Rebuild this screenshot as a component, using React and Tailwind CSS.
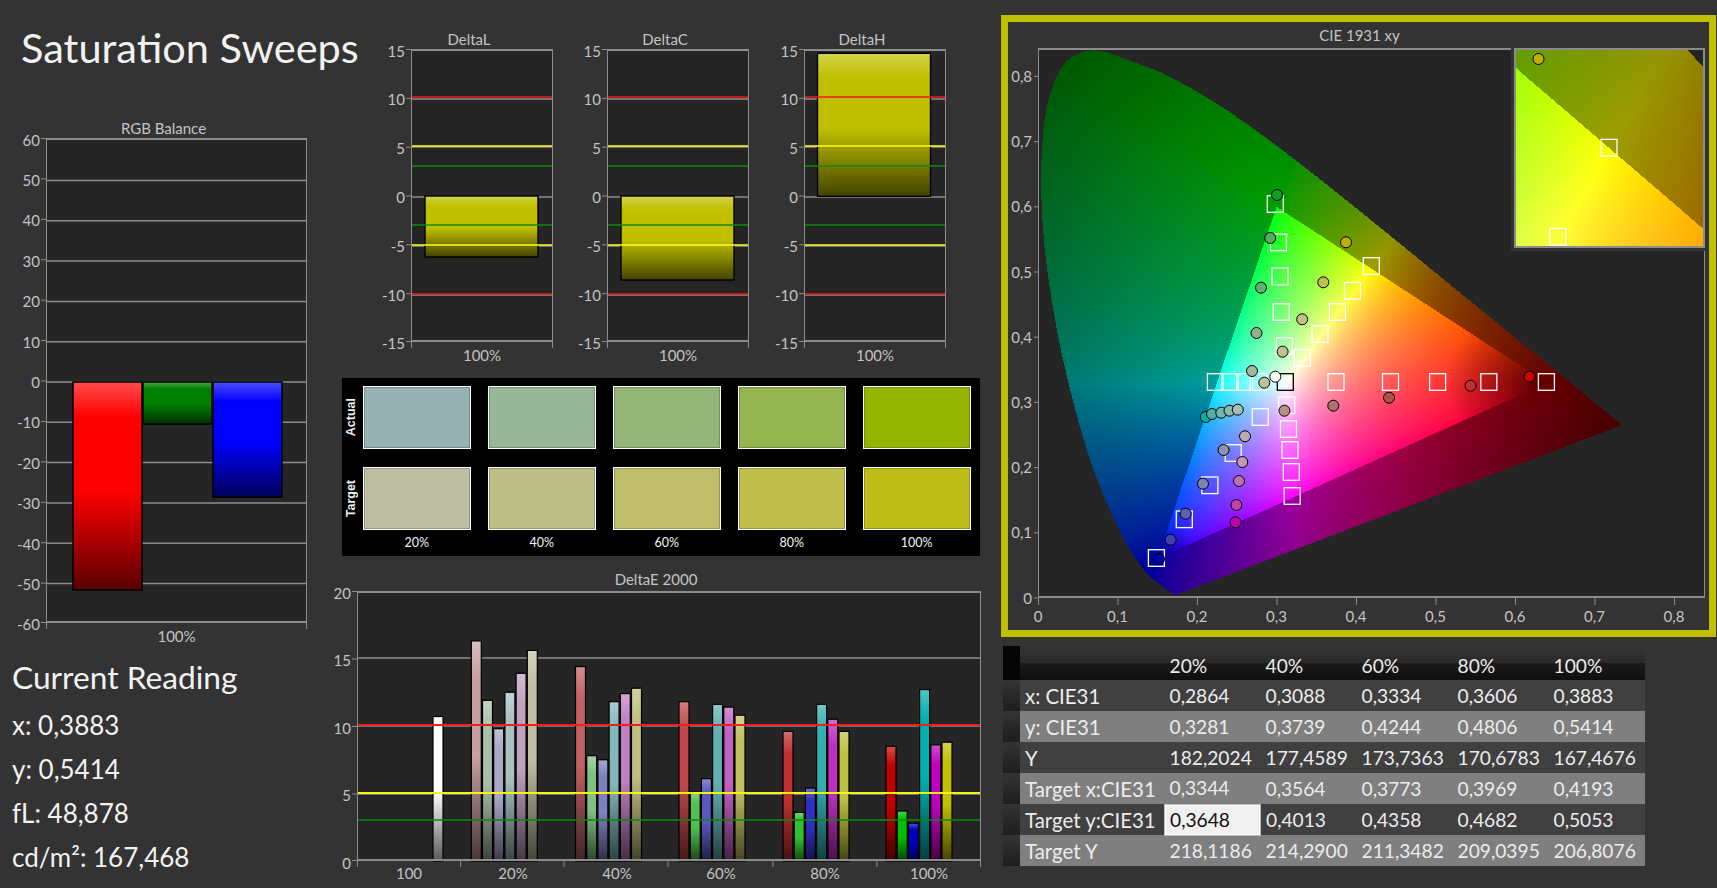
import { useEffect, useRef } from 'react'

const LOCUS_RAW = [
  [.1741,.005],[.1738,.0049],[.1733,.0048],[.1726,.0048],[.1714,.0051],[.1703,.0058],[.1689,.0069],[.1669,.0086],
  [.1644,.0109],[.1611,.0138],[.1566,.0177],[.151,.0227],[.144,.0297],[.1355,.0399],[.1241,.0578],[.1096,.0868],
  [.0913,.1327],[.0687,.2007],[.0454,.295],[.0235,.4127],[.0082,.5384],[.0039,.6548],[.0105,.7502],[.0285,.812],
  [.052,.8354],[.0787,.839],[.1247,.82],[.1547,.8059],[.1929,.7816],[.2296,.7543],[.2658,.7243],[.3016,.6923],[.3373,.6589],
  [.3731,.6245],[.4087,.5896],[.4441,.5547],[.4788,.5202],[.5125,.4866],[.5448,.4544],[.5752,.4242],[.6029,.3965],
  [.627,.3725],[.6482,.3514],[.6658,.334],[.6801,.3197],[.6915,.3083],[.7079,.292],[.719,.2809],[.726,.274],[.7334,.2666],[.7347,.2653],
]
// the 5nm table shows corners at this size, so round it off a bit
const LOCUS = LOCUS_RAW.flatMap((p, i, a) => {
  const p0 = a[Math.max(0, i - 1)], p2 = a[Math.min(a.length - 1, i + 1)], p3 = a[Math.min(a.length - 1, i + 2)]
  return [0, 1 / 3, 2 / 3].map(t => {
    const f = (k) => 0.5 * (2 * p[k] + (p2[k] - p0[k]) * t + (2 * p0[k] - 5 * p[k] + 4 * p2[k] - p3[k]) * t * t + (3 * p[k] - p0[k] - 3 * p2[k] + p3[k]) * t * t * t)
    return [f(0), f(1)]
  })
})
const R = [.64, .33], G = [.3, .6], B = [.15, .06]

const inLocus = (x, y) => {
  let inside = false
  for (let i = 0, j = LOCUS.length - 1; i < LOCUS.length; j = i++) {
    const [xi, yi] = LOCUS[i], [xj, yj] = LOCUS[j]
    if ((yi > y) !== (yj > y) && x < ((xj - xi) * (y - yi)) / (yj - yi) + xi) inside = !inside
  }
  return inside
}
const cross = (a, b, x, y) => (b[0] - a[0]) * (y - a[1]) - (b[1] - a[1]) * (x - a[0])
const segDist = (a, b, x, y) => {
  const dx = b[0] - a[0], dy = b[1] - a[1]
  const t = Math.min(1, Math.max(0, ((x - a[0]) * dx + (y - a[1]) * dy) / (dx * dx + dy * dy)))
  return Math.hypot(x - a[0] - t * dx, y - a[1] - t * dy)
}
const clamp = (v) => Math.min(1, Math.max(0, v))

// xy -> display colour, the gamut triangle is bright and everything around it dimmed
const xyColor = (x, y) => {
  const X = x / y, Z = (1 - x - y) / y
  let r = Math.max(0, 3.2406 * X - 1.5372 - 0.4986 * Z)
  let g = Math.max(0, -0.9689 * X + 1.8758 + 0.0415 * Z)
  let b = Math.max(0, 0.0557 * X - 0.204 + 1.057 * Z)
  const m = Math.max(r, g, b) || 1
  r = Math.pow(r / m, 0.75); g = Math.pow(g / m, 0.75); b = Math.pow(b / m, 0.75)
  const c1 = cross(R, G, x, y), c2 = cross(G, B, x, y), c3 = cross(B, R, x, y)
  let f
  if (c1 >= 0 && c2 >= 0 && c3 >= 0) {
    f = Math.min(clamp(0.3 + Math.hypot(x - R[0], y - R[1]) * 5.5), clamp(0.5 + Math.hypot(x - B[0], y - B[1]) * 9))
  } else {
    const d = Math.min(segDist(R, G, x, y), segDist(G, B, x, y), segDist(B, R, x, y))
    f = Math.max(0.33, 0.62 - 0.8 * d) * (1 - 0.45 * clamp((x - 0.45) / 0.25))
  }
  return [r * f * 255, g * f * 255, b * f * 255]
}

function Gamut({ w, h, toXY, className }) {
  const ref = useRef(null)
  useEffect(() => {
    const ctx = ref.current.getContext('2d')
    const img = ctx.createImageData(w, h)
    for (let py = 0; py < h; py++) {
      for (let px = 0; px < w; px++) {
        const [x, y] = toXY(px, py)
        if (y <= 0 || !inLocus(x, y)) continue
        const [r, g, b] = xyColor(x, y)
        const i = (py * w + px) * 4
        img.data[i] = r; img.data[i + 1] = g; img.data[i + 2] = b; img.data[i + 3] = 255
      }
    }
    ctx.putImageData(img, 0, 0)
  }, [])
  return <canvas ref={ref} width={w} height={h} className={className} />
}

const mix = (hex, to, t) => {
  const n = parseInt(hex.slice(1), 16)
  const ch = [n >> 16, (n >> 8) & 255, n & 255].map(c => Math.round(c + (to - c) * t))
  return `rgb(${ch.join(',')})`
}

function Bar({ x, y, w, h, color, sw = 1.5 }) {
  const id = `bar-${color.slice(1)}`
  return (
    <g>
      <linearGradient id={id} x1="0" y1="0" x2="0" y2="1">
        <stop offset="0" stopColor={mix(color, 255, 0.3)} />
        <stop offset="0.17" stopColor={color} />
        <stop offset="0.52" stopColor={color} />
        <stop offset="1" stopColor={mix(color, 0, 0.65)} />
      </linearGradient>
      <rect x={x} y={y} width={w} height={h} fill={`url(#${id})`} stroke="#000" strokeWidth={sw} />
    </g>
  )
}

function GridLine({ y, w }) {
  return <line x1="0" x2={w} y1={y} y2={y} stroke="#8c8c8c" strokeWidth="1.5" />
}

function Chart({ title, labels, xLabels, plotClass, w, h, children, xTicks, className = '', gapClass = 'mt-px' }) {
  return (
    <div className={`text-[15px] leading-[18px] text-[#c4c4c4] ${className}`}>
      <div className="text-center">{title}</div>
      <div className={`flex ${gapClass}`}>
        <div className="w-[26px] mt-[1.5px] -mb-[1.5px] flex flex-col justify-between items-end pr-[6px]">
          {labels.map(l => <div key={l} className="h-0 flex items-center whitespace-nowrap">{l}</div>)}
        </div>
        <div className={`bg-[#252525] ${plotClass}`}>
          <svg width={w} height={h} className="block overflow-visible">
            {children}
            <g stroke="#8c8c8c" fill="none">
              <line x1="0.5" y1="0" x2="0.5" y2={h} />
              <line x1={w - 0.5} y1="0" x2={w - 0.5} y2={h} />
              <line x1="0" y1="1" x2={w} y2="1" strokeWidth="2" />
              <line x1="0" y1={h - 1} x2={w} y2={h - 1} strokeWidth="2" />
              {xTicks.map(t => <line key={t} x1={t} x2={t} y1={h} y2={h + 6} />)}
            </g>
            {labels.map((_, i) => {
              const y = Math.min(h - 0.5, (i * h) / (labels.length - 1) + 0.5)
              return <line key={i} x1="-5" x2="0" y1={y} y2={y} stroke="#8c8c8c" />
            })}
          </svg>
        </div>
      </div>
      <div className="flex pl-[26px]">{xLabels}</div>
    </div>
  )
}

function DeltaChart({ title, bar, className = '' }) {
  const gridY = [50, 98, 148, 197, 246]
  return (
    <Chart title={title} labels={['15', '10', '5', '0', '-5', '-10', '-15']} plotClass="w-[142px] h-[293px]" w={142} h={293} xTicks={[0.5, 141.5]} className={`w-[168px] ${className}`}
      xLabels={<div className="w-[142px] text-center mt-[4px]">100%</div>}>
      {gridY.map(y => <GridLine key={y} y={y} w={142} />)}
      <Bar x={bar.x} y={bar.y} w={113} h={bar.h} color="#c0c000" sw={1.4} />
      <g fill="none">
        <line x1="0" x2="142" y1="48" y2="48" stroke="#f01818" strokeWidth="1.6" />
        <line x1="0" x2="142" y1="97" y2="97" stroke="#ffff20" strokeWidth="1.6" />
        <line x1="0" x2="142" y1="117" y2="117" stroke="#0e8a0e" strokeWidth="1.3" />
        <line x1="0" x2="142" y1="176" y2="176" stroke="#0e8a0e" strokeWidth="1.3" />
        <line x1="0" x2="142" y1="196" y2="196" stroke="#ffff20" strokeWidth="1.6" />
        <line x1="0" x2="142" y1="245" y2="245" stroke="#f01818" strokeWidth="1.6" />
      </g>
    </Chart>
  )
}

const SWATCHES = [
  { label: 'Actual', colors: ['#96b2b2', '#98b698', '#94b678', '#94b44e', '#94b400'] },
  { label: 'Target', colors: ['#bebea4', '#bebe88', '#bebe6a', '#bebe4c', '#c0be18'] },
]

const DE_GROUPS = [
  { label: '100', start: 76, bars: [[10.7, '#ffffff']] },
  { label: '20%', start: 114.3, bars: [[16.3, '#c8a0a0'], [11.9, '#a8c0a8'], [9.8, '#a8a8c8'], [12.5, '#a8c0c0'], [13.9, '#c0a0c0'], [15.6, '#c0c0a0']] },
  { label: '40%', start: 218.5, bars: [[14.4, '#c06060'], [7.8, '#80c080'], [7.5, '#8080c0'], [11.8, '#80b8b8'], [12.4, '#c080c0'], [12.8, '#c0c080']] },
  { label: '60%', start: 322, bars: [[11.8, '#c04848'], [5.1, '#50c050'], [6.1, '#5858c0'], [11.6, '#60b0b0'], [11.4, '#c060c0'], [10.8, '#c0c060']] },
  { label: '80%', start: 426, bars: [[9.6, '#c03030'], [3.6, '#30c030'], [5.4, '#3030c0'], [11.6, '#30b0b0'], [10.5, '#c030c0'], [9.6, '#c0c040']] },
  { label: '100%', start: 529, bars: [[8.5, '#c00000'], [3.7, '#00c000'], [2.8, '#0000c0'], [12.7, '#00b0b0'], [8.6, '#c000c0'], [8.8, '#c0c000']] },
]

// marker positions are page pixels, the plot sits at 1038,48
const SQUARES = [
  [1275.3,204],[1278.5,242.3],[1280,276.3],[1281.2,312],[1371.3,266],[1352.5,290.7],[1337.4,312],[1320,334],[1284.4,346],[1302.2,357.7],
  [1215.4,382],[1230,382],[1244.6,382],[1258.3,382],[1336,382],[1390.5,382],[1437.6,382],[1488.8,382],[1546.4,382],
  [1286.7,405.3],[1260.2,417],[1288.5,429],[1290,450],[1233.2,453],[1291.3,472],[1209.9,485.3],[1292.2,496],[1184.3,519.3],[1156.4,558],
]
const DOTS = [
  [1277,195,'#10a020'],[1270.2,238,'#50b060'],[1346,242.3,'#c0b000'],[1323.3,282.3,'#c0c050'],[1261,287.7,'#60b070'],[1302.2,319.3,'#c0c080'],
  [1256.5,333,'#90b090'],[1282.6,351.7,'#c0c090'],[1252,371,'#a0b8a0'],[1275.3,376.7,'#ffffff'],[1264.3,382.7,'#c0c0a0'],
  [1529.5,376.7,'#cc0000'],[1470.5,385.7,'#c03030'],[1389,397.7,'#b05050'],[1333.3,405.7,'#b07070'],[1284.4,410.7,'#b89088'],
  [1205.8,417,'#00b0a8'],[1212,414,'#50b0a8'],[1221.3,412.7,'#70b8b0'],[1229.5,410.7,'#88b8b0'],[1237.8,409.7,'#a0c0b8'],
  [1245,436.3,'#c0a8b0'],[1223.6,450,'#9090b0'],[1242.3,462,'#c098b0'],[1203,483.7,'#8080b0'],[1239,481,'#c070b0'],
  [1185.6,513.7,'#6060b0'],[1236.4,505,'#c040a8'],[1235.5,522.3,'#c000a8'],[1170.6,539.7,'#4040b0'],[1159,559,'#0000b0'],
]

const TABLE = [
  ['x: CIE31', '0,2864', '0,3088', '0,3334', '0,3606', '0,3883'],
  ['y: CIE31', '0,3281', '0,3739', '0,4244', '0,4806', '0,5414'],
  ['Y', '182,2024', '177,4589', '173,7363', '170,6783', '167,4676'],
  ['Target x:CIE31', '0,3344', '0,3564', '0,3773', '0,3969', '0,4193'],
  ['Target y:CIE31', '0,3648', '0,4013', '0,4358', '0,4682', '0,5053'],
  ['Target Y', '218,1186', '214,2900', '211,3482', '209,0395', '206,8076'],
]

function Square({ x, y, stroke = '#fff' }) {
  return <rect x={x - 8} y={y - 8.3} width="16" height="16.6" fill="none" stroke={stroke} strokeWidth="1.3" />
}

function LeftColumn() {
  const labels = ['60', '50', '40', '30', '20', '10', '0', '-10', '-20', '-30', '-40', '-50', '-60']
  return (
    <div className="w-[330px] shrink-0">
      <h1 className="ml-[21px] mt-[22px] text-[41.5px] leading-[50px] text-[#f2f2f2] whitespace-nowrap">Saturation Sweeps</h1>
      <Chart title="RGB Balance" labels={labels} plotClass="w-[261px] h-[485px]" w={261} h={485} xTicks={[0.5, 260.5]} className="ml-[20px] mt-[47px] w-[287px]"
        xLabels={<div className="w-[261px] text-center mt-[4px]">100%</div>}>
        {labels.slice(1, -1).map((_, i) => <GridLine key={i} y={244 + (i - 5) * 40.3} w={261} />)}
        <Bar x={27} y={244} w={69} h={208} color="#ff0000" />
        <Bar x={97} y={244} w={69} h={42} color="#008000" />
        <Bar x={167} y={244} w={69} h={115} color="#0000ff" />
      </Chart>
      <div className="ml-[12px] mt-[10px] text-[#f2f2f2]">
        <div className="text-[31.7px] leading-[44px]">Current Reading</div>
        <div className="text-[26px] leading-[44px] mt-[4px]">x: 0,3883</div>
        <div className="text-[26px] leading-[44px]">y: 0,5414</div>
        <div className="text-[26px] leading-[44px]">fL: 48,878</div>
        <div className="text-[26px] leading-[44px]">cd/m²: 167,468</div>
      </div>
    </div>
  )
}

function MiddleColumn() {
  return (
    <div className="w-[671px] shrink-0 pt-[30px]">
      <div className="flex ml-[55px]">
        <DeltaChart title="DeltaL" bar={{ x: 14, y: 147, h: 61 }} />
        <DeltaChart title="DeltaC" bar={{ x: 14, y: 147, h: 84 }} className="ml-[28px]" />
        <DeltaChart title="DeltaH" bar={{ x: 13.5, y: 4.3, h: 143 }} className="ml-[29px]" />
      </div>
      <div className="ml-[12px] mt-[14px] w-[638px] h-[178px] bg-black pt-[8px] flex flex-col gap-[18px]">
        {SWATCHES.map(row => (
          <div key={row.label} className="flex items-center">
            <div className="w-[21px] flex justify-center pr-[3px]">
              <span className="[writing-mode:vertical-rl] rotate-180 [font-family:'Liberation_Sans',sans-serif] font-bold text-[12.5px] leading-[14px] text-[#f0f0f0]">{row.label}</span>
            </div>
            <div className="flex gap-[17.4px]">
              {row.colors.map(c => (
                <div key={c} className="w-[107.6px] h-[63px] border border-white shadow-[inset_0_0_0_1px_rgba(0,0,0,0.2)]" style={{ background: c }} />
              ))}
            </div>
          </div>
        ))}
        <div className="flex gap-[17.4px] pl-[21px] -mt-[18px] h-[26px] items-center text-[12.5px] text-[#f4f4f4]">
          {['20%', '40%', '60%', '80%', '100%'].map(l => <div key={l} className="w-[107.6px] text-center">{l}</div>)}
        </div>
      </div>
      <Chart title="DeltaE 2000" labels={['20', '15', '10', '5', '0']} plotClass="w-[624px] h-[270px]" w={624} h={270} xTicks={[0.5, 103.6, 207, 311, 416, 520, 623.5]} className="ml-[1px] mt-[14px] w-[650px]" gapClass="mt-[3px]"
        xLabels={DE_GROUPS.map(g => <div key={g.label} className="w-[104px] text-center mt-[3px]">{g.label}</div>)}>
        {[67, 135, 203].map(y => <GridLine key={y} y={y} w={624} />)}
        {DE_GROUPS.map(g => g.bars.map(([v, c], i) => (
          <Bar key={i} x={g.start + i * 11.2} y={270 - v * 13.5} w={10} h={v * 13.5} color={c} sw={1.2} />
        )))}
        <line x1="0" x2="624" y1="134" y2="134" stroke="#f02020" strokeWidth="2" />
        <line x1="0" x2="624" y1="202" y2="202" stroke="#f4f410" strokeWidth="2" />
        <line x1="0" x2="624" y1="229" y2="229" stroke="#0c880c" strokeWidth="1.6" />
      </Chart>
    </div>
  )
}

function CieFrame() {
  const xs = ['0', '0,1', '0,2', '0,3', '0,4', '0,5', '0,6', '0,7', '0,8']
  const toXY = (px, py) => [(px + 0.5) / 795, (550 - py - 0.5) / 652]
  const insetXY = (px, py) => [0.4193 + (px - 93) / 2274, 0.5053 - (py - 97.7) / 2457]
  return (
    <div className="mt-[15px] w-[715px] h-[622px] border-[7px] border-[#c0c000] bg-[#333]">
      <div className="text-[15px] leading-[26px] text-[#c4c4c4] text-center pl-[4px] pr-[2px]">CIE 1931 xy</div>
      <div className="flex pl-[4px]">
        <div className="w-[26px] h-[550px] flex flex-col items-end pr-[6px] pt-[19px] gap-[47.2px] text-[15px] leading-[18px] text-[#c4c4c4]">
          {['0,8', '0,7', '0,6', '0,5', '0,4', '0,3', '0,2', '0,1', '0'].map(l => <div key={l} className="h-[18px] whitespace-nowrap">{l}</div>)}
        </div>
        <div className="relative w-[667px] h-[550px] bg-[#252525]">
          <Gamut w={667} h={550} toXY={toXY} className="block" />
          <svg width="667" height="550" className="absolute left-0 top-0 overflow-visible">
            <g stroke="#8c8c8c" fill="none">
              <line x1="0.5" y1="0" x2="0.5" y2="550" />
              <line x1="666.5" y1="0" x2="666.5" y2="550" />
              <line x1="0" y1="1" x2="667" y2="1" strokeWidth="2" />
              <line x1="0" y1="549" x2="667" y2="549" strokeWidth="2" />
              {xs.map((_, i) => <line key={i} x1={0.5 + i * 79.5} x2={0.5 + i * 79.5} y1="550" y2="557" />)}
              {xs.map((_, i) => <line key={i} x1="-4" x2="0" y1={550 - i * 65.2} y2={550 - i * 65.2} />)}
            </g>
            {SQUARES.map(([x, y], i) => <Square key={i} x={x - 1038} y={y - 48} />)}
            <Square x={1285.3 - 1038} y={382 - 48} stroke="#000" />
            {DOTS.map(([x, y, c], i) => <circle key={i} cx={x - 1038} cy={y - 48} r="5.5" fill={c} stroke="#000" strokeWidth="1" />)}
          </svg>
          <div className="absolute right-0 top-0 bg-[#333] pl-[3px] pb-[3px]">
            <div className="relative border-2 border-[#8c8c8c] bg-[#252525]">
              <Gamut w={187} h={196} toXY={insetXY} className="block" />
              <svg width="187" height="196" className="absolute left-0 top-0">
                <Square x={93} y={97.7} />
                <Square x={41.8} y={186.7} />
                <circle cx="22.5" cy="9" r="5.5" fill="#c0b000" stroke="#000" />
              </svg>
            </div>
          </div>
        </div>
      </div>
      <div className="flex pl-[30px] mt-[9px] text-[15px] leading-[18px] text-[#c4c4c4]">
        {xs.map(l => <div key={l} className="w-0 flex justify-center whitespace-nowrap mr-[79.5px]">{l}</div>)}
      </div>
    </div>
  )
}

function DataTable() {
  return (
    <table className="mt-[9px] ml-[2px] w-[642px] table-fixed text-[19.2px] text-[#ececec]">
      <colgroup>
        <col className="w-[17px]" />
        <col className="w-[144px]" />
        <col className="w-[96px]" />
        <col className="w-[96px]" />
        <col className="w-[96px]" />
        <col className="w-[96px]" />
        <col className="w-[97px]" />
      </colgroup>
      <thead>
        <tr className="h-[34px] bg-[linear-gradient(#343434_0%,#2a2a2a_49%,#1c1c1c_50%,#0e0e0e_100%)]">
          <th className="bg-[#050505]" />
          <th />
          {['20%', '40%', '60%', '80%', '100%'].map(h => <th key={h} className="text-left font-normal pl-[5.5px] pt-[6px] leading-[28px]">{h}</th>)}
        </tr>
      </thead>
      <tbody>
        {TABLE.map((row, i) => (
          <tr key={row[0]} className={`h-[31px] ${i % 2 ? 'bg-[#7f7f7f]' : 'bg-[#404040]'}`}>
            <td className="bg-linear-to-b from-[#343434] to-[#1e1e1e]" />
            {row.map((cell, j) => {
              const editing = i === 4 && j === 1
              return (
                <td key={j} className={`p-0 leading-[26px] whitespace-nowrap ${j === 0 ? 'pl-[5px] text-[20.4px]' : 'pl-[5.5px]'} ${editing ? 'bg-[#f0f0f0] text-[#111] border border-[#bbb] shadow-[inset_0_0_0_1px_#fff]' : ''}`}>{cell}</td>
              )
            })}
          </tr>
        ))}
      </tbody>
    </table>
  )
}

export default function App() {
  return (
    <div className="w-[1717px] h-[888px] overflow-hidden bg-[#333] flex [font-family:Lato,sans-serif]">
      <LeftColumn />
      <MiddleColumn />
      <div className="w-[716px] shrink-0">
        <CieFrame />
        <DataTable />
      </div>
    </div>
  )
}
